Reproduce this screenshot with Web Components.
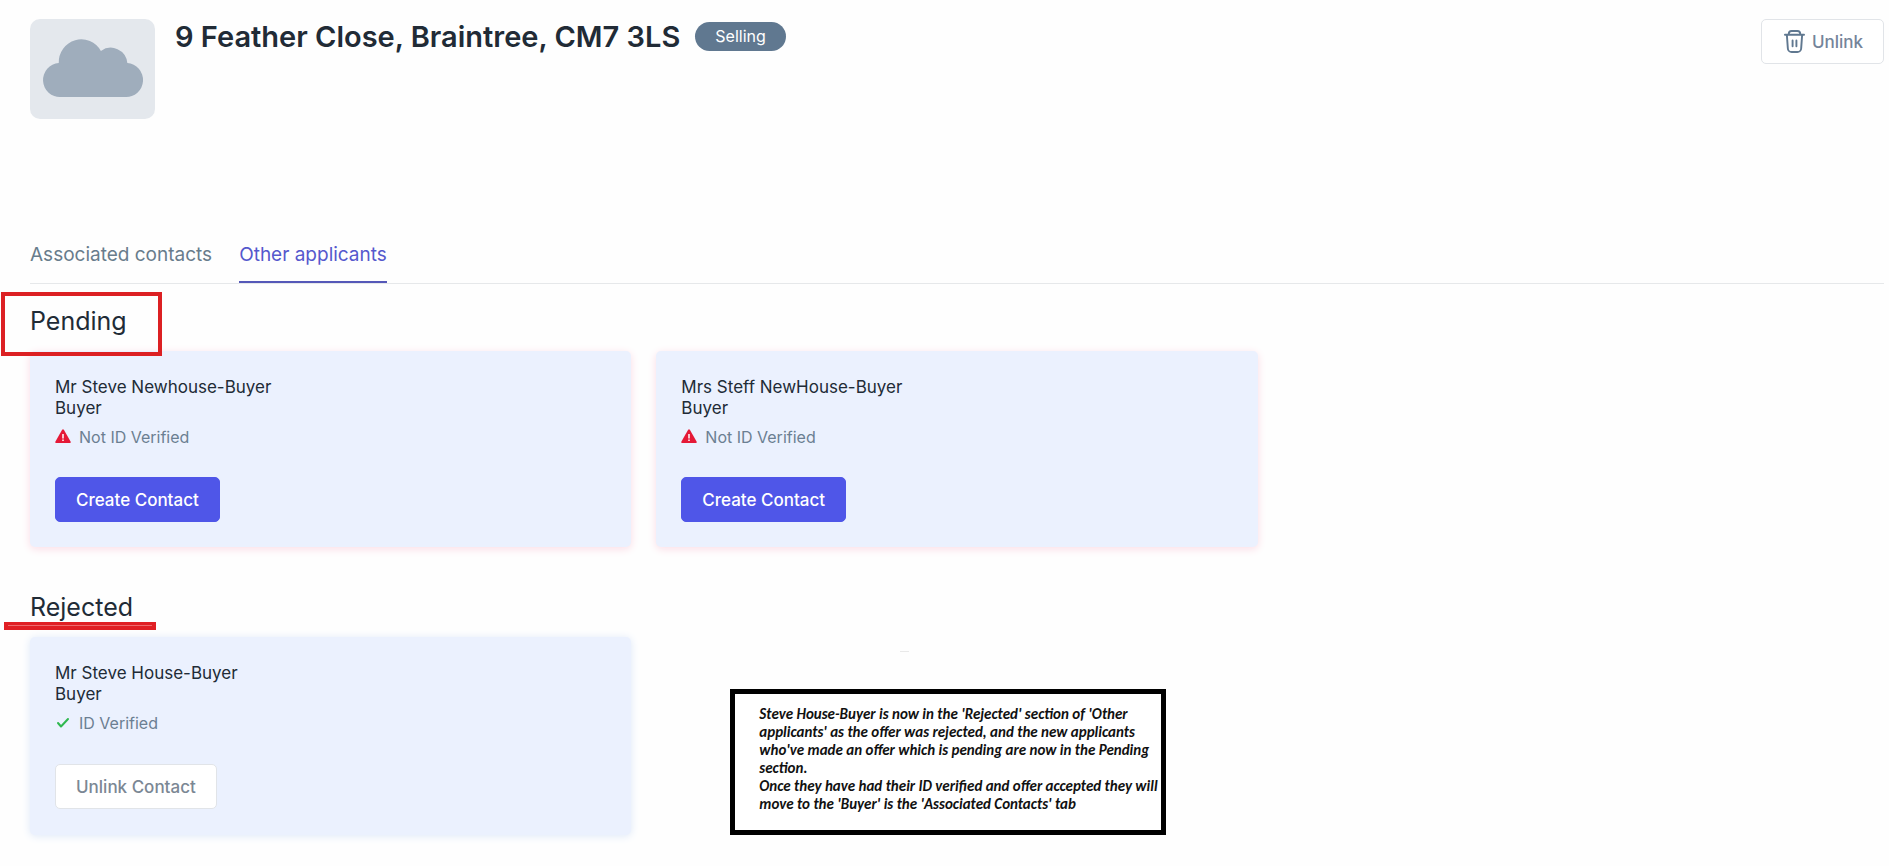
<!DOCTYPE html>
<html lang="en">
<head>
<meta charset="utf-8">
<title>9 Feather Close, Braintree, CM7 3LS</title>
<style>
  body { margin: 0; background: #fefefe; color: #212b36; font: 17px/21px Inter, "Liberation Sans", sans-serif; }
</style>
</head>
<body>
<property-page></property-page>

<template id="t-page">
  <style>
    :host { display: block; padding: 19px 5px 31px 30px; }
    main { display: block; }
    note-box { grid-column: 2; align-self: end; justify-self: start; margin-left: 74px; position: relative; }
  </style>
  <property-header>
    9 Feather Close, Braintree, CM7 3LS
    <status-badge slot="badge">Selling</status-badge>
    <action-button slot="action" kind="icon">Unlink</action-button>
  </property-header>
  <tab-bar></tab-bar>
  <main>
    <applicant-section mark="box" heading="Pending">
      <applicant-card name="Mr Steve Newhouse-Buyer" role-name="Buyer" status="unverified"></applicant-card>
      <applicant-card name="Mrs Steff NewHouse-Buyer" role-name="Buyer" status="unverified"></applicant-card>
    </applicant-section>
    <applicant-section mark="line" heading="Rejected">
      <applicant-card name="Mr Steve House-Buyer" role-name="Buyer" status="verified"></applicant-card>
      <note-box>Steve House-Buyer is now in the 'Rejected' section of 'Other<br>applicants' as the offer was rejected, and the new applicants<br>who've made an offer which is pending are now in the Pending<br>section.<br>Once they have had their ID verified and offer accepted they will<br>move to the 'Buyer' is the 'Associated Contacts' tab</note-box>
    </applicant-section>
  </main>
</template>

<template id="t-header">
  <style>
    :host { display: flex; align-items: flex-start; min-height: 211px; }
    .thumb { flex: none; display: block; width: 125px; height: 100px; border-radius: 10px; background: #e4e8ed; margin-right: 20px; }
    h1 { margin: 0; font-size: 29px; line-height: 36px; font-weight: 600; white-space: nowrap; }
    .badge { margin: 3px 0 0 15px; }
    .action { margin-left: auto; }
  </style>
  <svg class="thumb" viewBox="0 0 125 100" role="img" aria-label="No photo">
    <path fill="#9fadbc" d="M30 78A17 17 0 0 1 28 44A23 23 0 0 1 71 32A17 17 0 0 1 98 44A17 17 0 0 1 96 78z" transform="translate(1.300 0) scale(.98 1)"/>
  </svg>
  <h1><slot></slot></h1>
  <div class="badge"><slot name="badge"></slot></div>
  <div class="action"><slot name="action"></slot></div>
</template>

<template id="t-badge">
  <style>
    :host { display: block; padding: 4px 20px; border-radius: 15px; background: #607890; color: #fff; font-size: 16px; line-height: 21px; }
  </style>
  <slot></slot>
</template>

<template id="t-button">
  <style>
    :host { display: inline-block; }
    button { display: flex; align-items: center; gap: 7px; box-sizing: border-box; height: 45px; padding: 2px 20px 0; border: 1px solid #e1e4e8; border-radius: 5px; background: #fff; color: #7b8794; font: 500 17px/21px Inter, "Liberation Sans", sans-serif; white-space: nowrap; cursor: pointer; }
    svg { display: none; flex: none; margin: 0 0 2px 2px; }
    :host([kind="icon"]) svg { display: block; }
    :host([kind="icon"]) button { color: #74849a; }
    :host([kind="primary"]) button { background: #4f56e8; border-color: #4f56e8; color: #fff; }
  </style>
  <button type="button">
    <svg width="21" height="23" viewBox="0 0 22 24" fill="none" stroke="#607890" stroke-width="2" stroke-linecap="round" stroke-linejoin="round" aria-hidden="true">
      <path d="M1 5h20M5 5V4a3 3 0 0 1 3-3h6a3 3 0 0 1 3 3v1M3 5l1 14a4 4 0 0 0 4 4h6a4 4 0 0 0 4-4l1-14M9 11v6M13 11v6"/>
    </svg>
    <slot></slot>
  </button>
</template>

<template id="t-tabs">
  <style>
    :host { display: block; border-bottom: 1px solid #e6e8ea; }
    nav { display: flex; gap: 27px; }
    a { padding: 14px 0 15px; border-bottom: 2px solid transparent; color: #687c8c; font-size: 19px; line-height: 22px; font-weight: 400; text-decoration: none; }
    a[aria-current] { color: #5558cd; border-color: #5558b8; }
  </style>
  <nav><a href="#associated">Associated contacts</a><a href="#other" aria-current="page">Other applicants</a></nav>
</template>

<template id="t-section">
  <style>
    :host { display: block; }
    :host([mark="line"]) { margin-top: 42px; }
    h2 { position: relative; margin: 0; padding: 22px 0 15px; font-size: 25px; line-height: 30px; font-weight: 400; }
    :host([mark="line"]) h2 { padding: 3px 0 15px; }
    .grid { display: grid; grid-template-columns: repeat(3, minmax(0, 1fr)); gap: 25px; }
    .mark { position: absolute; box-sizing: border-box; }
    :host([mark="box"]) .mark { left: -29px; top: 8px; width: 161px; height: 64px; border: 4px solid #dc2023; z-index: 1; }
    :host([mark="line"]) .mark { left: -26px; bottom: 7px; width: 152px; height: 8px; background: #e01f24; }
    :host([mark="line"]) .mark::after { content: ""; position: absolute; left: 4px; right: 4px; top: 3px; height: 1px; background: #ee6a6d; }
  </style>
  <h2><span class="text"></span><span class="mark" aria-hidden="true"></span></h2>
  <div class="grid"><slot></slot></div>
</template>

<template id="t-card">
  <style>
    :host { display: block; box-sizing: border-box; padding: 26px 25px 25px; border-radius: 5px; background: #ebf1fe; box-shadow: 0 2px 9px #fbdce6; }
    :host([status="verified"]) { box-shadow: 0 1px 8px #dde8f8; padding-bottom: 26px; }
    p { margin: 0; }
    .state { display: flex; align-items: center; gap: 8px; margin: 8px 0 30px; color: #6b7f92; font-size: 16px; line-height: 20px; }
    :host([status="verified"]) .state { margin-bottom: 31px; }
    svg { display: none; }
    :host([status="verified"]) .ok, :host([status="unverified"]) .warn { display: block; }
  </style>
  <p class="name"></p>
  <p class="role"></p>
  <p class="state">
    <svg class="warn" width="16" height="16" viewBox="0 0 16 16" aria-hidden="true"><path fill="#e51937" d="M7 1Q8-.6 9 1l6.700 11.700Q16 14 15 14H1Q0 14 .3 12.700z"/><path stroke="#fff" stroke-width="1.500" d="M8 5v4.500M8 10.500v1.600"/></svg>
    <svg class="ok" width="16" height="16" viewBox="0 0 16 16" fill="none" stroke="#2fb84f" stroke-width="2" stroke-linecap="round" stroke-linejoin="round" aria-hidden="true"><path d="M3 8l3 3.500L13 4"/></svg>
    <span class="label"></span>
  </p>
  <action-button></action-button>
</template>

<template id="t-note">
  <style>
    :host { display: block; box-sizing: border-box; width: 436px; padding: 11px 0 17px 24px; border: 5px solid #000; background: #fff; color: #111; font: italic 700 15px/18px Carlito, Lato, sans-serif; white-space: nowrap; }
    i { position: absolute; left: 165px; top: -43px; width: 9px; height: 1px; background: #e9e9e9; }
  </style>
  <slot></slot><i aria-hidden="true"></i>
</template>

<script>
  const define = (tag, id, setup) => customElements.define(tag, class extends HTMLElement {
    constructor() {
      super();
      this.attachShadow({ mode: "open" }).append(document.getElementById(id).content.cloneNode(true));
    }
    connectedCallback() { if (setup) setup(this, s => this.shadowRoot.querySelector(s)); }
  });
  define("status-badge", "t-badge");
  define("action-button", "t-button");
  define("note-box", "t-note");
  define("tab-bar", "t-tabs");
  define("property-header", "t-header");
  define("applicant-card", "t-card", (el, $) => {
    const ok = el.getAttribute("status") === "verified";
    $(".name").textContent = el.getAttribute("name");
    $(".role").textContent = el.getAttribute("role-name");
    $(".label").textContent = ok ? "ID Verified" : "Not ID Verified";
    const button = $("action-button");
    button.setAttribute("kind", ok ? "plain" : "primary");
    button.textContent = ok ? "Unlink Contact" : "Create Contact";
  });
  define("applicant-section", "t-section", (el, $) => { $(".text").textContent = el.getAttribute("heading"); });
  define("property-page", "t-page");
</script>
</body>
</html>
